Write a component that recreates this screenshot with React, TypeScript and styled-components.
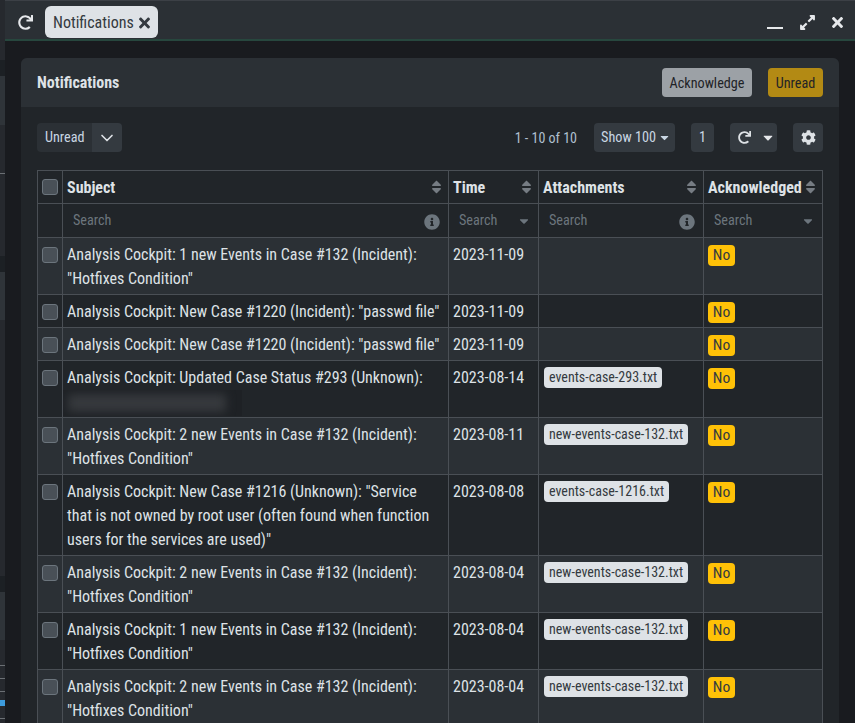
import React from "react";
import styled, { createGlobalStyle } from "styled-components";
import { FaRedo, FaTimes, FaExpandAlt, FaCog, FaInfoCircle, FaSort, FaCaretDown } from "react-icons/fa";
import { ChevronDown } from "lucide-react";

const Global = createGlobalStyle`
  html, body { margin: 0; padding: 0; height: 723px; overflow: hidden; background: #191b1f; }
  * { box-sizing: border-box; }
  #root { height: 723px; }
`;

const Page = styled.div`
  display: flex;
  height: 723px;
  overflow: hidden;
  font-family: "Roboto", sans-serif;
  font-stretch: condensed;
  font-size: 16px;
  line-height: 24px;
  color: #dee2e6;
`;
const BackStrip = styled.div`
  width: 5px;
  flex: none;
  display: flex;
  flex-direction: column;
  background: #26292e;
`;
const StripBand = styled.div<{ $h: number; $c: string }>`
  height: ${(p) => p.$h}px;
  flex: none;
  background: ${(p) => p.$c};
`;
const Win = styled.div`
  flex: 1;
  min-width: 0;
  display: flex;
  flex-direction: column;
`;
const TopBar = styled.div`
  height: 41px;
  flex: none;
  display: flex;
  align-items: center;
  background: #2b3035;
  border-top: 1px solid #3c4046;
  border-bottom: 2px solid #27473e;
  padding: 4px 12px 0 12px;
`;
const PlainIcon = styled.span<{ $ml?: number; $w?: number }>`
  display: inline-flex;
  align-items: center;
  justify-content: center;
  color: #e6e8eb;
  margin-left: ${(p) => p.$ml ?? 0}px;
  width: ${(p) => p.$w ?? 16}px;
`;
const Tab = styled.div`
  margin-left: 12px;
  height: 32px;
  width: 113px;
  border-radius: 6px;
  background: #dee2e6;
  color: #343a40;
  display: flex;
  align-items: center;
  padding-left: 8px;
  gap: 5px;
`;
const TabLabel = styled.span`
  padding-top: 2px;
`;
const Spacer = styled.div`
  flex: 1;
`;
const MinBar = styled.span`
  display: block;
  width: 16px;
  height: 2px;
  margin-top: 11px;
  background: #e6e8eb;
`;
const Content = styled.div`
  flex: 1;
  padding: 17px 16px 0;
  min-height: 0;
`;
const Card = styled.div`
  background: #212529;
  border-radius: 6px 6px 0 0;
  height: 100%;
`;
const CardHead = styled.div`
  height: 49px;
  background: #2b3035;
  border-radius: 6px 6px 0 0;
  display: flex;
  align-items: center;
  padding: 0 16px;
`;
const CardTitle = styled.div`
  font-weight: 700;
  flex: 1;
  color: #dee2e6;
`;
const HeadButton = styled.div<{ $bg: string; $w: number; $ml?: number }>`
  width: ${(p) => p.$w}px;
  height: 29px;
  margin-left: ${(p) => p.$ml ?? 0}px;
  border-radius: 4px;
  background: ${(p) => p.$bg};
  color: #1f2327;
  font-size: 14.2px;
  display: flex;
  align-items: center;
  justify-content: center;
`;
const CardBody = styled.div`
  padding: 16px;
`;
const Toolbar = styled.div`
  height: 29px;
  display: flex;
  align-items: center;
`;
const SelectValue = styled.div`
  width: 55px;
  height: 29px;
  background: #2b3035;
  border-radius: 4px 0 0 4px;
  color: #c9d6e3;
  font-size: 14.2px;
  padding: 0 0 1px 8px;
  display: flex;
  align-items: center;
`;
const SelectArrow = styled.div`
  width: 30px;
  height: 29px;
  background: #343a40;
  border-radius: 0 4px 4px 0;
  color: #dee2e6;
  display: flex;
  align-items: center;
  justify-content: center;
`;
const PageInfo = styled.div`
  margin-left: auto;
  color: #b0c0d0;
  font-size: 14px;
`;
const ToolButton = styled.div<{ $w: number; $ml: number; $pl?: number }>`
  width: ${(p) => p.$w}px;
  height: 29px;
  margin-left: ${(p) => p.$ml}px;
  padding: 0 0 1px ${(p) => p.$pl ?? 0}px;
  background: #343a40;
  border-radius: 4px;
  color: #c9d6e3;
  font-size: 14.2px;
  display: flex;
  align-items: center;
  justify-content: center;
  gap: 2px;
`;
const Table = styled.table`
  margin-top: 18px;
  width: 785px;
  table-layout: fixed;
  border-collapse: collapse;
`;
const HeadRow = styled.tr`
  height: 33px;
`;
const SearchRow = styled.tr`
  height: 34px;
`;
const Row = styled.tr<{ $alt: boolean }>`
  background: ${(p) => (p.$alt ? "#2b3035" : "#212529")};
`;
const Th = styled.th`
  border: 1px solid #4a4f55;
  padding: 0 4px;
  text-align: left;
  font-weight: 700;
  color: #dee2e6;
`;
const ThInner = styled.div`
  display: flex;
  align-items: center;
  justify-content: space-between;
  white-space: nowrap;
`;
const HeadLabel = styled.span`
  padding-top: 2px;
`;
const SortIcon = styled(FaSort)`
  flex: none;
  color: #767c83;
  width: 11px;
  height: 16px;
  margin-right: 2px;
`;
const SearchCell = styled.th`
  border: 1px solid #4a4f55;
  padding: 0 4px 0 10px;
  text-align: left;
  font-weight: 400;
  font-size: 14.2px;
`;
const SearchInner = styled.div`
  display: flex;
  align-items: center;
  justify-content: space-between;
  color: #6c757d;
`;
const SearchLabel = styled.span`
  padding-bottom: 2px;
`;
const InfoIcon = styled(FaInfoCircle)`
  width: 16px;
  height: 16px;
  color: #6c757d;
  margin: 3px 4px 0 0;
`;
const CaretIcon = styled(FaCaretDown)`
  width: 10px;
  height: 14px;
  color: #6c757d;
  margin: 1px 5px 0 0;
`;
const Td = styled.td`
  border: 1px solid #4a4f55;
  padding: 5px 4px 3px;
  vertical-align: top;
  color: #dee2e6;
`;
const CheckCell = styled.td`
  border: 1px solid #4a4f55;
  padding: 9px 0 0 4px;
  vertical-align: top;
`;
const HeadCheckCell = styled.th`
  border: 1px solid #4a4f55;
  padding: 0 0 0 4px;
`;
const Check = styled.div`
  width: 16px;
  height: 16px;
  border-radius: 3px;
  background: #495057;
  border: 1px solid #6c757d;
`;
const Chip = styled.span`
  display: block;
  width: fit-content;
  height: 21px;
  line-height: 20px;
  padding: 0 5px;
  margin: 1px 0 0 1px;
  border-radius: 4px;
  background: #dee2e6;
  color: #343a40;
  font-size: 14px;
`;
const NoBadge = styled.span`
  display: block;
  height: 21px;
  width: 27px;
  line-height: 21px;
  margin-top: 2px;
  text-align: center;
  border-radius: 4px;
  background: #ffc107;
  color: #343a40;
  font-size: 15.5px;
`;
const BlurBox = styled.div`
  height: 26px;
  width: 179px;
  margin: 0 0 -2px -4px;
  background: #1e2125;
  overflow: hidden;
  padding: 4px 0 0 5px;
`;
const BlurInk = styled.div`
  height: 18px;
  width: 158px;
  background: #36393d;
  filter: blur(5px);
`;
const TopIconRedo = styled(FaRedo)`
  width: 15px;
  height: 15px;
`;
const TabClose = styled(FaTimes)`
  width: 11px;
  height: 16px;
  margin-top: 1px;
  color: #343a40;
`;

type R = { s: string[]; blur?: boolean; t: string; a?: string };
const e1 = '"Hotfixes Condition"';
const rows: R[] = [
  { s: ["Analysis Cockpit: 1 new Events in Case #132 (Incident):", e1], t: "2023-11-09" },
  { s: ['Analysis Cockpit: New Case #1220 (Incident): "passwd file"'], t: "2023-11-09" },
  { s: ['Analysis Cockpit: New Case #1220 (Incident): "passwd file"'], t: "2023-11-09" },
  { s: ["Analysis Cockpit: Updated Case Status #293 (Unknown):"], blur: true, t: "2023-08-14", a: "events-case-293.txt" },
  { s: ["Analysis Cockpit: 2 new Events in Case #132 (Incident):", e1], t: "2023-08-11", a: "new-events-case-132.txt" },
  {
    s: [
      'Analysis Cockpit: New Case #1216 (Unknown): "Service',
      "that is not owned by root user (often found when function",
      'users for the services are used)"',
    ],
    t: "2023-08-08",
    a: "events-case-1216.txt",
  },
  { s: ["Analysis Cockpit: 2 new Events in Case #132 (Incident):", e1], t: "2023-08-04", a: "new-events-case-132.txt" },
  { s: ["Analysis Cockpit: 1 new Events in Case #132 (Incident):", e1], t: "2023-08-04", a: "new-events-case-132.txt" },
  { s: ["Analysis Cockpit: 2 new Events in Case #132 (Incident):", e1], t: "2023-08-04", a: "new-events-case-132.txt" },
];

const base = "#26292e";
const dark = "#1c2024";
const light = "#2f3439";
const rule = "#6b6f74";
const stripBands: [number, string][] = [
  [60, base],
  [16, dark],
  [49, light],
  [48, base],
  [1, rule],
  [82, base],
  [16, dark],
  [48, light],
  [256, base],
  [16, dark],
  [48, light],
  [25, base],
  [1, rule],
  [12, base],
  [1, rule],
  [12, base],
  [1, rule],
  [8, base],
  [6, "#3d9bdc"],
  [12, base],
  [1, rule],
  [4, base],
];

export default function App() {
  return (
    <>
      <Global />
      <Page>
        <BackStrip>
          {stripBands.map(([h, c], i) => (
            <StripBand key={i} $h={h} $c={c} />
          ))}
        </BackStrip>
        <Win>
          <TopBar>
            <PlainIcon>
              <TopIconRedo />
            </PlainIcon>
            <Tab>
              <TabLabel>Notifications</TabLabel>
              <TabClose />
            </Tab>
            <Spacer />
            <PlainIcon>
              <MinBar />
            </PlainIcon>
            <PlainIcon $ml={16} $w={17}>
              <FaExpandAlt size={17} />
            </PlainIcon>
            <PlainIcon $ml={16} $w={11}>
              <FaTimes size={17} />
            </PlainIcon>
          </TopBar>
          <Content>
            <Card>
              <CardHead>
                <CardTitle>Notifications</CardTitle>
                <HeadButton $bg="#9ca1a6" $w={90}>
                  Acknowledge
                </HeadButton>
                <HeadButton $bg="#b38a14" $w={55} $ml={16}>
                  Unread
                </HeadButton>
              </CardHead>
              <CardBody>
                <Toolbar>
                  <SelectValue>Unread</SelectValue>
                  <SelectArrow>
                    <ChevronDown size={20} />
                  </SelectArrow>
                  <PageInfo>1 - 10 of 10</PageInfo>
                  <ToolButton $w={81} $ml={17} $pl={3}>
                    Show 100
                    <FaCaretDown size={13} />
                  </ToolButton>
                  <ToolButton $w={23} $ml={16}>
                    1
                  </ToolButton>
                  <ToolButton $w={47} $ml={16} $pl={4}>
                    <FaRedo size={13} color="#dee2e6" />
                    <PlainIcon $ml={9} $w={12}>
                      <FaCaretDown size={15} />
                    </PlainIcon>
                  </ToolButton>
                  <ToolButton $w={30} $ml={16}>
                    <FaCog size={15} color="#dee2e6" />
                  </ToolButton>
                </Toolbar>
                <Table>
                  <colgroup>
                    <col width={25} />
                    <col width={386} />
                    <col width={90} />
                    <col width={165} />
                    <col width={119} />
                  </colgroup>
                  <thead>
                    <HeadRow>
                      <HeadCheckCell>
                        <Check />
                      </HeadCheckCell>
                      {["Subject", "Time", "Attachments", "Acknowledged"].map((h) => (
                        <Th key={h}>
                          <ThInner>
                            <HeadLabel>{h}</HeadLabel>
                            <SortIcon />
                          </ThInner>
                        </Th>
                      ))}
                    </HeadRow>
                    <SearchRow>
                      <SearchCell />
                      <SearchCell>
                        <SearchInner>
                          <SearchLabel>Search</SearchLabel>
                          <InfoIcon />
                        </SearchInner>
                      </SearchCell>
                      <SearchCell>
                        <SearchInner>
                          <SearchLabel>Search</SearchLabel>
                          <CaretIcon />
                        </SearchInner>
                      </SearchCell>
                      <SearchCell>
                        <SearchInner>
                          <SearchLabel>Search</SearchLabel>
                          <InfoIcon />
                        </SearchInner>
                      </SearchCell>
                      <SearchCell>
                        <SearchInner>
                          <SearchLabel>Search</SearchLabel>
                          <CaretIcon />
                        </SearchInner>
                      </SearchCell>
                    </SearchRow>
                  </thead>
                  <tbody>
                    {rows.map((r, i) => (
                      <Row key={i} $alt={i % 2 === 0}>
                        <CheckCell>
                          <Check />
                        </CheckCell>
                        <Td>
                          {r.s.map((l, j) => (
                            <div key={j}>{l}</div>
                          ))}
                          {r.blur && (
                            <BlurBox>
                              <BlurInk />
                            </BlurBox>
                          )}
                        </Td>
                        <Td>{r.t}</Td>
                        <Td>{r.a && <Chip>{r.a}</Chip>}</Td>
                        <Td>
                          <NoBadge>No</NoBadge>
                        </Td>
                      </Row>
                    ))}
                  </tbody>
                </Table>
              </CardBody>
            </Card>
          </Content>
        </Win>
      </Page>
    </>
  );
}
